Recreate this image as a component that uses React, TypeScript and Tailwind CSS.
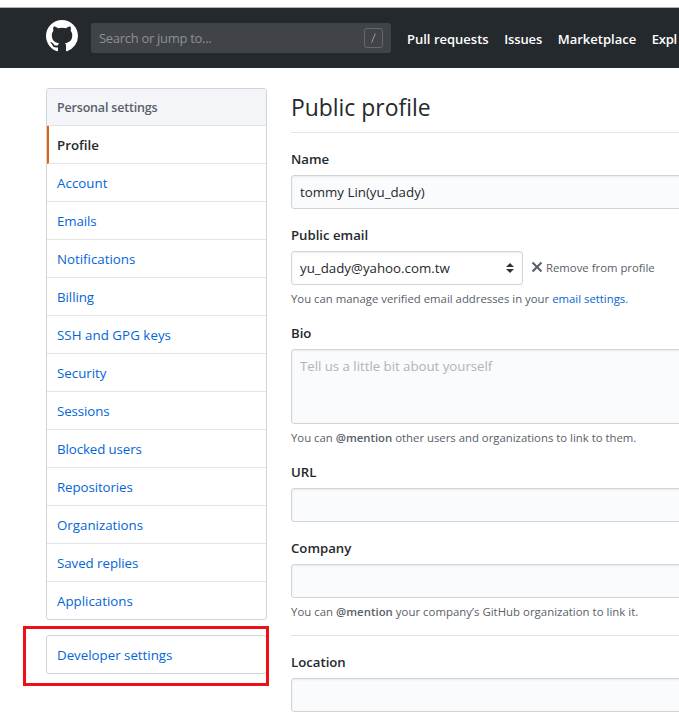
import React from "react";

const links = [
  { label: "Account", cls: "tracking-[0.05px]" },
  { label: "Emails", cls: "tracking-[-0.1px]" },
  { label: "Notifications", cls: "" },
  { label: "Billing", cls: "tracking-[-0.05px]" },
  { label: "SSH and GPG keys", cls: "tracking-[0.05px]" },
  { label: "Security", cls: "" },
  { label: "Sessions", cls: "tracking-[-0.1px]" },
  { label: "Blocked users", cls: "tracking-[-0.1px]" },
  { label: "Repositories", cls: "tracking-[-0.1px]" },
  { label: "Organizations", cls: "" },
  { label: "Saved replies", cls: "tracking-[-0.05px]" },
  { label: "Applications", cls: "" },
];

const fieldBox =
  "w-[440px] rounded-[3px] border border-[#d1d5da] bg-[#fafbfc] px-2 shadow-[inset_0_1px_2px_rgba(27,31,35,0.075)]";

function Label({ children }: { children: React.ReactNode }) {
  return <div className="h-[21px] pt-px text-[13.2px] leading-[21px] font-semibold">{children}</div>;
}

function Note({ children }: { children: React.ReactNode }) {
  return <p className="mt-[5px] h-[18px] text-[11.35px] leading-[18px] text-[#586069]">{children}</p>;
}

function Header() {
  return (
    <header className="flex h-[61px] items-center border-t border-[#b3b3b3] bg-[#24292e] pl-[46px] text-[13.3px] text-white">
      <svg className="-mt-1 size-8 shrink-0" viewBox="0 0 16 16" fill="currentColor">
        <path
          fillRule="evenodd"
          d="M8 0C3.58 0 0 3.58 0 8c0 3.54 2.29 6.53 5.47 7.59.4.07.55-.17.55-.38 0-.19-.01-.82-.01-1.49-2.01.37-2.53-.49-2.69-.94-.09-.23-.48-.94-.82-1.13-.28-.15-.68-.52-.01-.53.63-.01 1.08.58 1.23.82.72 1.21 1.87.87 2.33.66.07-.52.28-.87.51-1.07-1.78-.2-3.64-.89-3.64-3.95 0-.87.31-1.59.82-2.15-.08-.2-.36-1.02.08-2.12 0 0 .67-.21 2.2.82.64-.18 1.32-.27 2-.27.68 0 1.36.09 2 .27 1.53-1.04 2.2-.82 2.2-.82.44 1.1.16 1.92.08 2.12.51.56.82 1.27.82 2.15 0 3.07-1.87 3.75-3.65 3.95.29.25.54.73.54 1.48 0 1.07-.01 1.93-.01 2.2 0 .21.15.46.55.38A8.013 8.013 0 0016 8c0-4.42-3.58-8-8-8z"
        />
      </svg>
      <div className="ml-[13px] flex h-[30px] w-[300px] shrink-0 items-center justify-between rounded-[3px] bg-[#404448] pr-2 pl-2 text-[#8d9093]">
        <span className="pt-[2px] text-[13px] tracking-[-0.3px]">Search or jump to...</span>
        <span className="flex h-5 w-[19px] items-center justify-center rounded-[3px] border border-[#66696c]">
          <svg className="h-[10px] w-[5px]" viewBox="0 0 5 10" stroke="#979a9c" fill="none">
            <path d="M4.3 .5L.7 9.5" />
          </svg>
        </span>
      </div>
      <nav className="ml-4 flex shrink-0 gap-[15.5px] pt-[3px] text-[13px] font-semibold whitespace-nowrap">
        <span>Pull requests</span>
        <span className="tracking-[-0.1px]">Issues</span>
        <span>Marketplace</span>
        <span className="tracking-[-0.2px]">Expl</span>
      </nav>
    </header>
  );
}

export default function App() {
  return (
    <div className="h-[718px] w-[679px] overflow-hidden bg-white pt-[7px] font-['Open_Sans','Noto_Sans',sans-serif] text-[13.3px] text-[#24292e]">
      <Header />
      <div className="flex items-start pt-5 pl-[46px]">
        <aside className="w-[221px] shrink-0">
          <div className="overflow-hidden rounded-[3px] border border-[#d1d5da]">
            <div className="flex h-[37px] items-center border-b border-[#e1e4e8] bg-[#f3f5f8] pt-[2px] pl-[10px] text-[12.5px] font-semibold tracking-[-0.18px] text-[#586069]">
              Personal settings
            </div>
            <div className="flex h-[38px] items-center border-b border-l-2 border-b-[#e1e4e8] border-l-[#e36209] pt-[2px] pl-2 font-[550]">
              Profile
            </div>
            {links.map((l) => (
              <div
                key={l.label}
                className="flex h-[38px] items-center border-b border-[#e1e4e8] pt-[2px] pl-[10px] text-[#0366d6] last:h-[37px] last:border-b-0"
              >
                <span className={l.cls}>{l.label}</span>
              </div>
            ))}
          </div>
          <div className="relative mt-[15px] flex h-[39px] items-center rounded-[3px] border border-[#d1d5da] pt-[2px] pl-[10px] text-[#0366d6]">
            Developer settings
            <div className="absolute -top-[10px] -left-[24px] h-[60px] w-[246px] border-[3px] border-[#ee1019]" />
          </div>
        </aside>
        <main className="ml-6 w-[440px] shrink-0 whitespace-nowrap">
          <h2 className="h-[45px] border-b border-[#e1e4e8] text-[22.9px] leading-[39px]">Public profile</h2>
          <div className="pt-[15px]">
            <Label>Name</Label>
            <div className={`mt-[6px] flex h-[34px] items-center pt-[2px] ${fieldBox}`}>tommy Lin(yu_dady)</div>
          </div>
          <div className="pt-[15px]">
            <Label>Public email</Label>
            <div className="mt-[6px] flex items-center">
              <div className="flex h-[34px] w-[232px] items-center justify-between rounded-[3px] border border-[#d1d5da] pr-2 pl-2 shadow-[inset_0_1px_2px_rgba(27,31,35,0.075)]">
                <span className="pt-[2px]">yu_dady@yahoo.com.tw</span>
                <svg className="h-[10px] w-2" viewBox="0 0 8 10" fill="#333">
                  <path d="M4 0L8 4H0zM4 10L0 6h8z" />
                </svg>
              </div>
              <svg className="ml-2 h-4 w-3 -translate-y-px" viewBox="0 0 12 16" fill="#586069">
                <path d="M7.48 8l3.75 3.75-1.48 1.48L6 9.48l-3.75 3.75-1.48-1.48L4.52 8 .77 4.25l1.48-1.48L6 6.52l3.75-3.75 1.48 1.48L7.48 8z" />
              </svg>
              <span className="ml-[3px] text-[11.35px] text-[#586069]">Remove from profile</span>
            </div>
            <Note>
              You can manage verified email addresses in your <span className="text-[#0366d6]">email settings</span>.
            </Note>
          </div>
          <div className="pt-[14px]">
            <Label>Bio</Label>
            <div className={`mt-[6px] h-[75px] pt-[6px] leading-[21px] tracking-[-0.04px] text-[#b0b4b9] ${fieldBox}`}>
              Tell us a little bit about yourself
            </div>
            <Note>
              You can <b className="font-semibold">@mention</b> other users and organizations to link to them.
            </Note>
          </div>
          <div className="pt-[14px]">
            <Label>URL</Label>
            <div className={`mt-[6px] h-[34px] ${fieldBox}`} />
          </div>
          <div className="pt-[15px]">
            <Label>Company</Label>
            <div className={`mt-[6px] h-[34px] ${fieldBox}`} />
            <Note>
              <span className="tracking-[0.04px]">
                You can <b className="font-semibold">@mention</b> your company’s GitHub organization to link it.
              </span>
            </Note>
          </div>
          <div className="mt-[14px] border-t border-[#dfe2e5] pt-[15px]">
            <Label>Location</Label>
            <div className={`mt-[6px] h-[34px] ${fieldBox}`} />
          </div>
        </main>
      </div>
    </div>
  );
}
